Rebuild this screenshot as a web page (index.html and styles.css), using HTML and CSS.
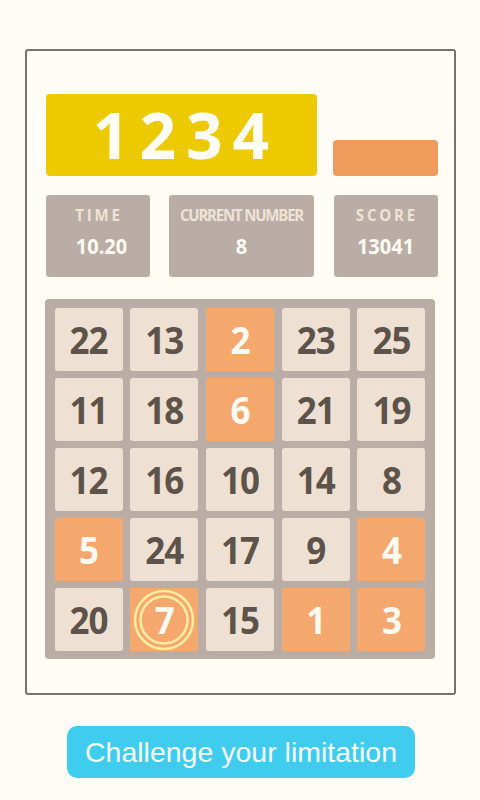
FILE: index.html
```html
<!DOCTYPE html>
<html>
<head>
<meta charset="utf-8">
<link rel="stylesheet" href="styles.css">
</head>
<body>
<div class="frame">
  <div class="top">
    <div class="title">1234</div>
    <div class="pill"></div>
  </div>
  <div class="stats">
    <div class="stat stat-time">
      <div class="label spaced">TIME</div>
      <div class="value value-time">10.20</div>
    </div>
    <div class="stat stat-current">
      <div class="label tight">CURRENT NUMBER</div>
      <div class="value">8</div>
    </div>
    <div class="stat stat-score">
      <div class="label spaced">SCORE</div>
      <div class="value">13041</div>
    </div>
  </div>
  <div class="board">
    <div class="cell"><span class="num">22</span></div>
    <div class="cell"><span class="num">13</span></div>
    <div class="cell hot"><span class="num">2</span></div>
    <div class="cell"><span class="num">23</span></div>
    <div class="cell"><span class="num">25</span></div>
    <div class="cell"><span class="num">11</span></div>
    <div class="cell"><span class="num">18</span></div>
    <div class="cell hot"><span class="num">6</span></div>
    <div class="cell"><span class="num">21</span></div>
    <div class="cell"><span class="num">19</span></div>
    <div class="cell"><span class="num">12</span></div>
    <div class="cell"><span class="num">16</span></div>
    <div class="cell"><span class="num">10</span></div>
    <div class="cell"><span class="num">14</span></div>
    <div class="cell"><span class="num">8</span></div>
    <div class="cell hot"><span class="num">5</span></div>
    <div class="cell"><span class="num">24</span></div>
    <div class="cell"><span class="num">17</span></div>
    <div class="cell"><span class="num">9</span></div>
    <div class="cell hot"><span class="num">4</span></div>
    <div class="cell"><span class="num">20</span></div>
    <div class="cell hot marked">
      <svg class="ring" width="64" height="64" viewBox="0 0 64 64">
        <circle cx="32" cy="32" r="29" fill="none" stroke="#fcea9f" stroke-width="2.6"/>
        <circle cx="32" cy="32" r="23.5" fill="none" stroke="#fcea9f" stroke-width="2.6"/>
      </svg>
      <span class="num">7</span>
    </div>
    <div class="cell"><span class="num">15</span></div>
    <div class="cell hot"><span class="num">1</span></div>
    <div class="cell hot"><span class="num">3</span></div>
  </div>
</div>
<div class="cta">Challenge your limitation</div>
</body>
</html>
```
FILE: styles.css
```css
html, body {
  margin: 0;
  padding: 0;
  background: #fffcf6;
}
body {
  width: 480px;
  height: 800px;
  overflow: hidden;
  font-family: "Open Sans", "Noto Sans", sans-serif;
}
.frame {
  box-sizing: border-box;
  margin: 49px 0 0 25px;
  width: 431px;
  height: 646px;
  border: 2.5px solid #77726b;
  border-radius: 3px;
  background: #fffcf6;
  padding: 43px 15.5px 0 18.5px;
}
.top {
  display: flex;
  align-items: flex-end;
  gap: 16px;
}
.title {
  width: 271px;
  height: 82px;
  background: #edc900;
  border-radius: 4px;
  color: #fffdf5;
  font-weight: 700;
  font-size: 64px;
  letter-spacing: 10px;
  text-indent: 10px;
  display: flex;
  align-items: center;
  justify-content: center;
  line-height: 1;
}
.pill {
  width: 105px;
  height: 36px;
  background: #ef9b5b;
  border-radius: 4px;
}
.stats {
  display: flex;
  justify-content: space-between;
  width: 392px;
  margin-top: 19px;
}
.stat {
  height: 82px;
  background: #b9ada5;
  border-radius: 3px;
  display: flex;
  flex-direction: column;
  align-items: center;
  box-sizing: border-box;
  padding-top: 9px;
}
.stat-time { width: 104px; }
.stat-current { width: 145px; }
.stat-score { width: 104px; }
.label {
  color: #efe3d6;
  font-weight: 700;
  font-size: 15px;
  line-height: 20px;
  transform: scaleY(1.12);
}
.spaced { letter-spacing: 2.8px; text-indent: 2.8px; }
.tight { letter-spacing: -1.2px; }
.value {
  color: #fffaf3;
  font-weight: 700;
  font-size: 20px;
  line-height: 28px;
  margin-top: 8px;
  transform: scaleY(1.1);
}
.value-time { padding-left: 8px; }
.board {
  margin: 22px 0 0 -1px;
  width: 390px;
  height: 360px;
  box-sizing: border-box;
  background: #b9ada5;
  border-radius: 4px;
  padding: 9px 9px 8px 10px;
  display: grid;
  grid-template-columns: repeat(5, 1fr);
  grid-template-rows: repeat(5, 1fr);
  column-gap: 7.5px;
  row-gap: 7px;
}
.cell {
  background: #eee1d4;
  border-radius: 3px;
  color: #5d534a;
  font-weight: 700;
  font-size: 35px;
  display: flex;
  align-items: center;
  justify-content: center;
  line-height: 1;
  letter-spacing: -1px;
}
.cell.hot {
  background: #f5a86e;
  color: #fffaf2;
  border-radius: 0;
}
.num {
  display: block;
  transform: scaleY(1.08);
}
.marked {
  position: relative;
}
.ring {
  position: absolute;
  left: 50%;
  top: 50%;
  margin: -32px 0 0 -32px;
}
.marked .num {
  position: relative;
}
.cta {
  margin: 31px 0 0 67px;
  width: 348px;
  height: 52px;
  background: #40ccee;
  border-radius: 10px;
  color: #f5fdff;
  font-family: "Liberation Sans", Arial, sans-serif;
  font-size: 28.5px;
  display: flex;
  align-items: center;
  justify-content: center;
  line-height: 1;
}
```
